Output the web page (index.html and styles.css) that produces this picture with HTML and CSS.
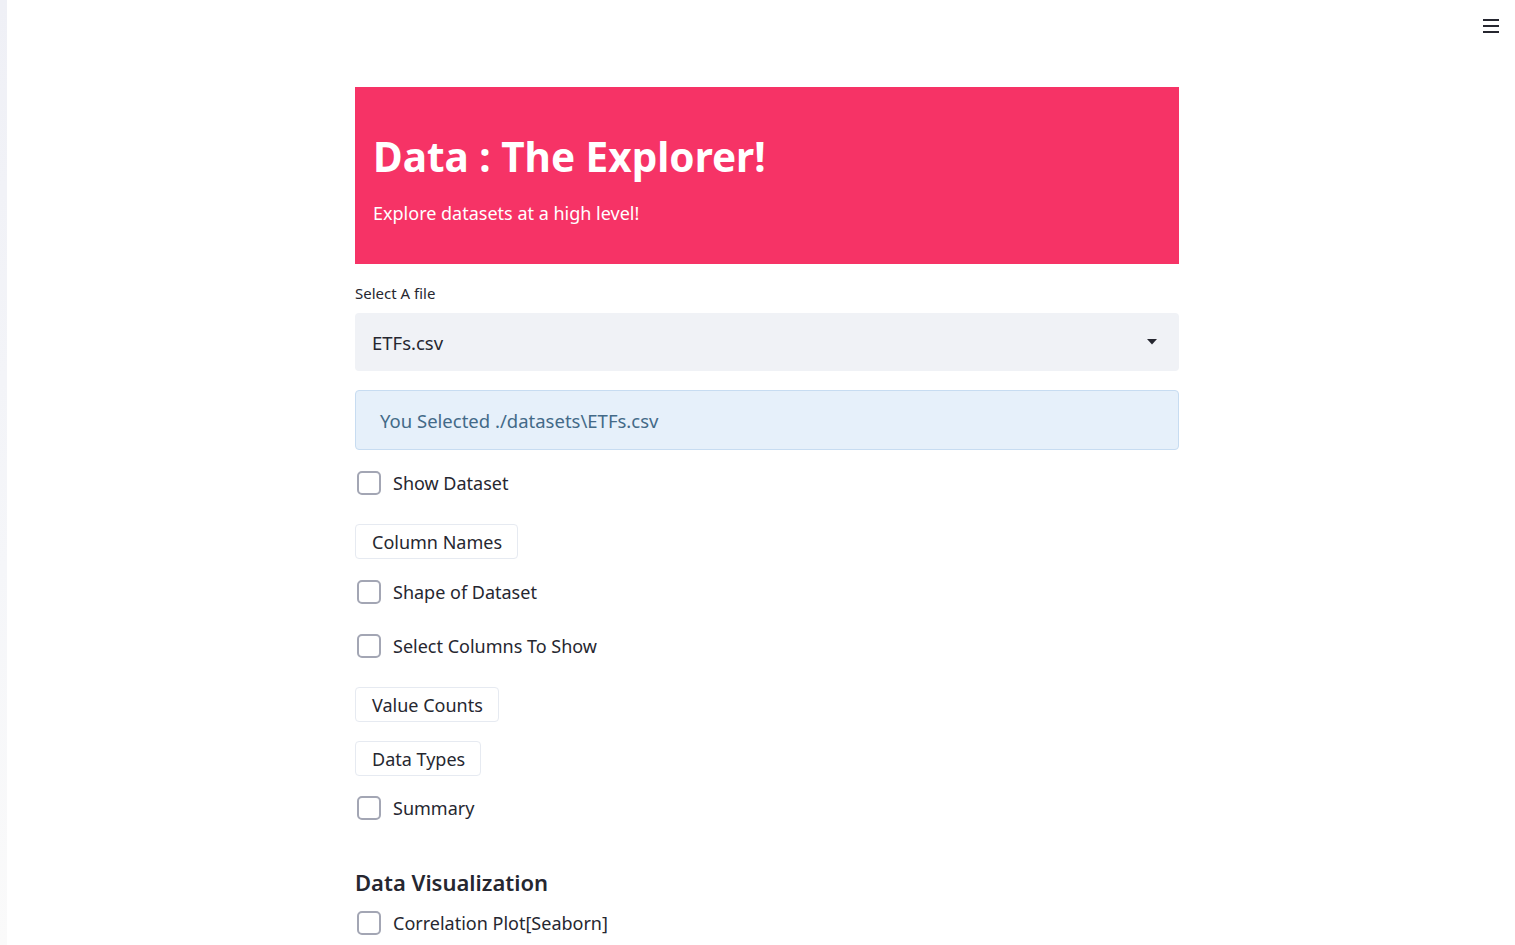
FILE: index.html
```html
<!DOCTYPE html>
<html lang="en">
<head>
<meta charset="utf-8">
<title>Data : The Explorer!</title>
<link rel="stylesheet" href="styles.css">
</head>
<body>
<div class="app">
  <aside class="sidebar-edge"></aside>
  <main class="main">
    <header class="topbar">
      <button class="menu" aria-label="menu">
        <svg width="18" height="16" viewBox="0 0 18 16"><rect x="1" y="1" width="16" height="2" fill="#262730"/><rect x="1" y="7" width="16" height="2" fill="#262730"/><rect x="1" y="13" width="16" height="2" fill="#262730"/></svg>
      </button>
    </header>
    <div class="block">
      <section class="banner">
        <h1 class="banner-title">Data : The Explorer!</h1>
        <p class="banner-sub">Explore datasets at a high level!</p>
      </section>

      <label class="field-label">Select A file</label>
      <div class="select">
        <span class="select-value">ETFs.csv</span>
        <svg class="caret" width="10" height="6" viewBox="0 0 10 6"><path d="M0 0 H10 L5 5.5 Z" fill="#262730"/></svg>
      </div>

      <div class="info">You Selected ./datasets\ETFs.csv</div>

      <div class="check g21"><span class="box"></span><span>Show Dataset</span></div>
      <button class="btn g29">Column Names</button>
      <div class="check g21"><span class="box"></span><span>Shape of Dataset</span></div>
      <div class="check g30"><span class="box"></span><span>Select Columns To Show</span></div>
      <button class="btn g29">Value Counts</button>
      <button class="btn g19">Data Types</button>
      <div class="check g20"><span class="box"></span><span>Summary</span></div>

      <h2 class="subhead">Data Visualization</h2>
      <div class="check g13"><span class="box"></span><span>Correlation Plot[Seaborn]</span></div>
    </div>
  </main>
</div>
</body>
</html>
```
FILE: styles.css
```css
* { box-sizing: border-box; }
html, body { margin: 0; padding: 0; height: 100%; overflow: hidden; }
body {
  font-family: "Noto Sans", "Open Sans", sans-serif;
  color: #262730;
  background: #ffffff;
}
.app { display: flex; height: 945px; }
.sidebar-edge {
  width: 7px;
  flex: 0 0 7px;
  background: linear-gradient(180deg, #eff0f6 0%, #f5f6f9 60%, #fafafa 100%);
}
.main { flex: 1; position: relative; }
.topbar { height: 0; }
.menu {
  position: absolute;
  top: 18px;
  right: 15px;
  border: 0;
  background: transparent;
  padding: 0;
  width: 18px;
  height: 16px;
  display: block;
}
.menu svg { display: block; }
.block {
  width: 824px;
  margin: 0 0 0 348px;
  padding-top: 87px;
  display: flex;
  flex-direction: column;
  align-items: flex-start;
}
.banner {
  width: 100%;
  height: 177px;
  background: #f63366;
  padding: 0 18px;
  overflow: hidden;
}
.banner-title {
  margin: 46px 0 0;
  font-size: 40.5px;
  line-height: 48px;
  font-weight: 700;
  color: #ffffff;
}
.banner-sub {
  margin: 18px 0 0;
  font-size: 18px;
  line-height: 28px;
  color: #ffffff;
}
.field-label {
  margin-top: 19px;
  font-size: 15px;
  line-height: 20px;
}
.select {
  margin-top: 10px;
  width: 100%;
  height: 58px;
  background: #f0f2f6;
  border-radius: 4px;
  display: flex;
  align-items: center;
  justify-content: space-between;
  padding: 0 22px 0 17px;
}
.select-value { font-size: 18.5px; }
.caret { display: block; }
.info {
  margin-top: 19px;
  width: 100%;
  height: 60px;
  background: #e6f0fa;
  border: 1px solid #c7dcf1;
  border-radius: 4px;
  display: flex;
  align-items: center;
  padding: 0 24px;
  font-size: 18.5px;
  color: #436a88;
}
.check {
  display: flex;
  align-items: center;
  height: 24px;
  font-size: 18px;
  gap: 12px;
  padding-left: 2px;
}
.box {
  width: 24px;
  height: 24px;
  border: 2px solid #a3a6b4;
  border-radius: 5px;
  background: #fff;
  flex: 0 0 24px;
}
.btn {
  font-family: inherit;
  font-size: 18px;
  color: #262730;
  background: #ffffff;
  border: 1px solid #e6eaf1;
  border-radius: 4px;
  height: 35px;
  padding: 0 15px 0 16px;
  display: inline-flex;
  align-items: center;
}
.g13 { margin-top: 13px; }
.g19 { margin-top: 19px; }
.g20 { margin-top: 20px; }
.g21 { margin-top: 21px; }
.g29 { margin-top: 29px; }
.g30 { margin-top: 30px; }
.subhead {
  margin: 46px 0 0;
  font-size: 22px;
  line-height: 32px;
  font-weight: 600;
}
```
